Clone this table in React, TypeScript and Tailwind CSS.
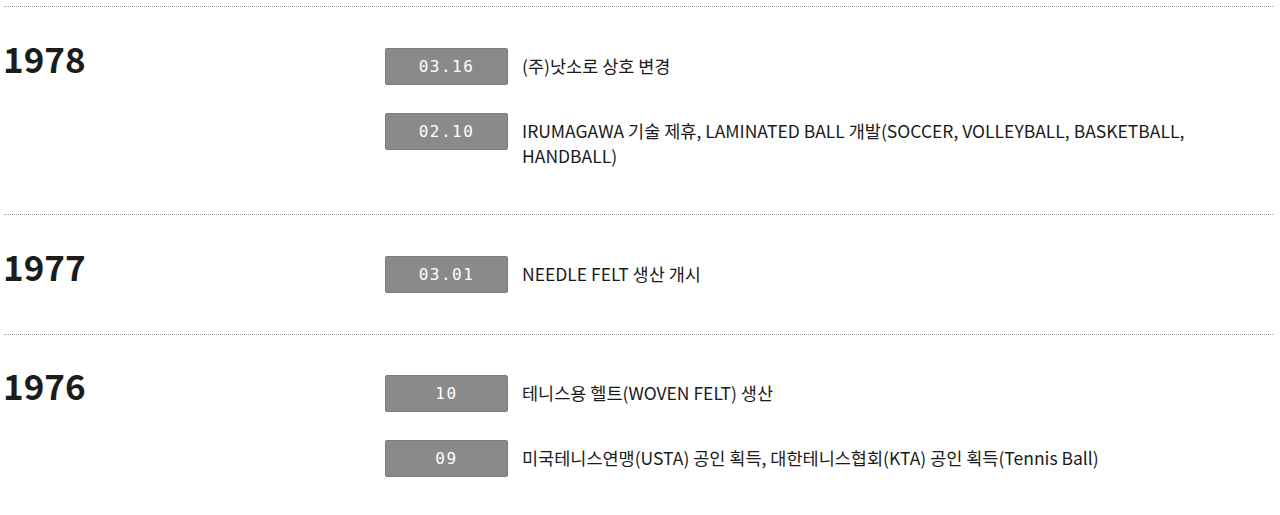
const HISTORY = [
  {
    year: "1978",
    items: [
      { date: "03.16", text: "(주)낫소로 상호 변경" },
      {
        date: "02.10",
        text: "IRUMAGAWA 기술 제휴, LAMINATED BALL 개발(SOCCER, VOLLEYBALL, BASKETBALL, HANDBALL)",
      },
    ],
  },
  {
    year: "1977",
    items: [{ date: "03.01", text: "NEEDLE FELT 생산 개시" }],
  },
  {
    year: "1976",
    items: [
      { date: "10", text: "테니스용 헬트(WOVEN FELT) 생산" },
      {
        date: "09",
        text: "미국테니스연맹(USTA) 공인 획득, 대한테니스협회(KTA) 공인 획득(Tennis Ball)",
      },
    ],
  },
];

export default function App() {
  return (
    <div className="min-h-[515px] bg-white pl-[4px] pr-[7px] pt-[6px] font-['Noto_Sans_CJK_KR','Noto_Sans',sans-serif] text-[#1a1a1a]">
      {HISTORY.map((section) => (
        <div
          key={section.year}
          className="flex border-t border-dotted border-[#9a9a9a] pt-[41px] pb-[41px] last:pt-[40px] last:pb-[37px]"
        >
          {/* 연도 */}
          <div className="w-[381px] shrink-0 text-[35px] font-bold leading-[20px] text-[#1c1c1c]">
            <span className="-ml-[1px] block">{section.year}</span>
          </div>

          {/* 월별 항목 */}
          <ul className="flex flex-1 flex-col gap-[28px]">
            {section.items.map((item) => (
              <li key={item.date} className="flex">
                <span className="flex h-[37px] w-[123px] shrink-0 items-center justify-center rounded-[2px] border border-[#7c7c7c] bg-[#8a8a8a] pt-[1px] font-['DejaVu_Sans_Mono',monospace] text-[16px] tracking-[1.5px] text-white">
                  {item.date}
                </span>
                <p className="pl-[14px] pr-[80px] pt-[5px] pb-[5px] text-[17.5px] leading-[25px]">
                  {item.text}
                </p>
              </li>
            ))}
          </ul>
        </div>
      ))}
    </div>
  );
}
